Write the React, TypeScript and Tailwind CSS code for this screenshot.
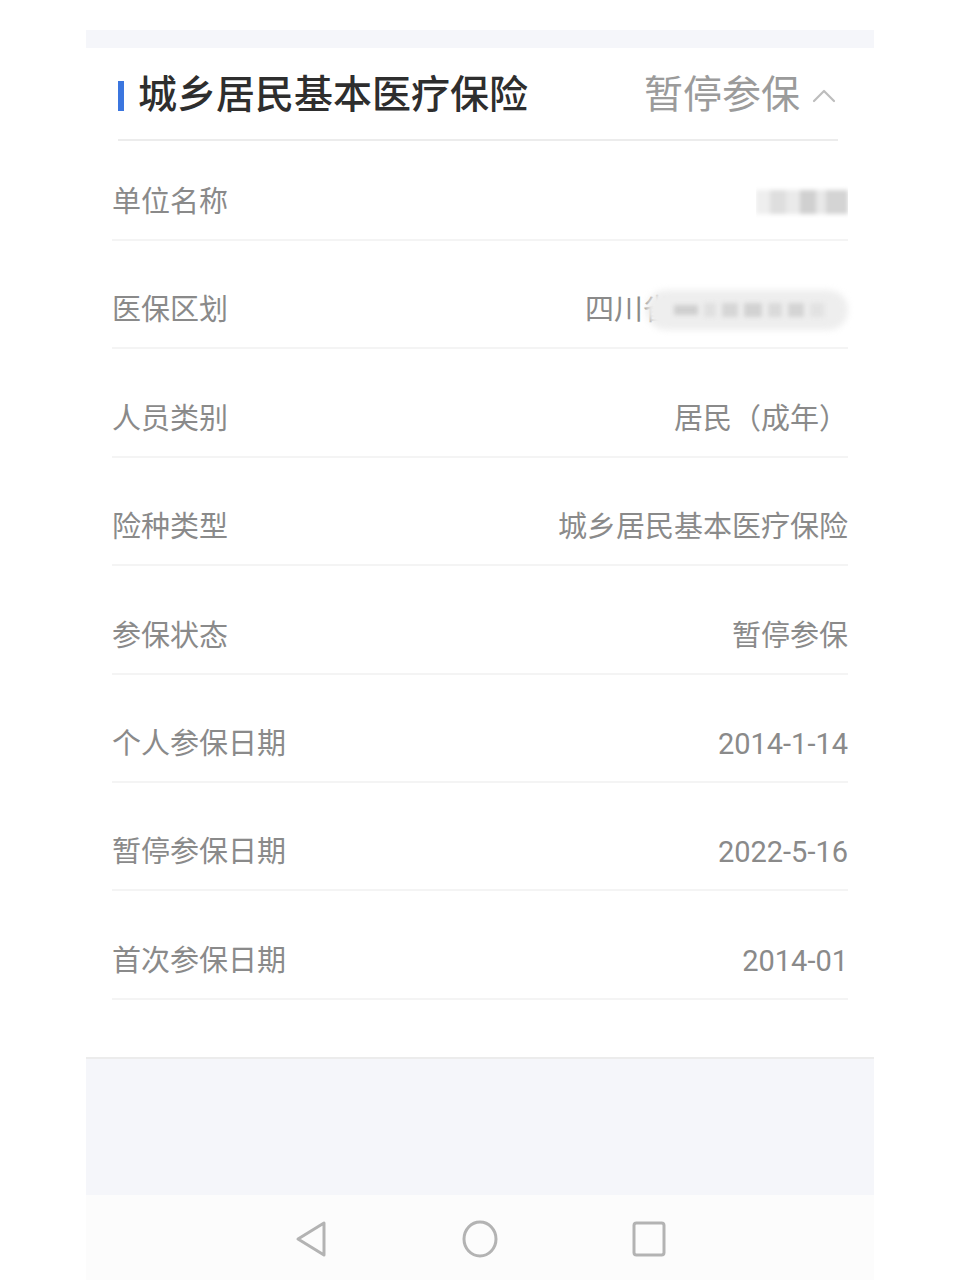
import React from "react";

const rows: { label: string; value?: string; kind?: "blur1" | "blur2" }[] = [
  { label: "单位名称", kind: "blur1" },
  { label: "医保区划", kind: "blur2" },
  { label: "人员类别", value: "居民（成年）" },
  { label: "险种类型", value: "城乡居民基本医疗保险" },
  { label: "参保状态", value: "暂停参保" },
  { label: "个人参保日期", value: "2014-1-14" },
  { label: "暂停参保日期", value: "2022-5-16" },
  { label: "首次参保日期", value: "2014-01" },
];

const font = "font-['Roboto','Noto_Sans_CJK_SC',sans-serif]";

function BlurValue1() {
  // pixelated/blurred company name
  return (
    <div className="relative w-[92px] h-[40px] overflow-hidden">
      <div className="absolute inset-0 blur-[2px] flex items-center">
        <div className="h-[24px] w-[14px] bg-[#eeeeee]" />
        <div className="h-[24px] w-[16px] bg-[#dedede]" />
        <div className="h-[24px] w-[14px] bg-[#eaeaea]" />
        <div className="h-[24px] w-[16px] bg-[#d0d0d0]" />
        <div className="h-[24px] w-[10px] bg-[#e8e8e8]" />
        <div className="h-[24px] w-[22px] bg-[#d4d4d4]" />
      </div>
    </div>
  );
}

function BlurValue2() {
  return (
    <div className="flex items-center">
      <span className="text-[29px] leading-none text-[#8a8a8a]">四川省</span>
      <div className="relative -ml-[26px] w-[202px] h-[40px]">
        <div className="absolute inset-0 rounded-full bg-[#eeeeee] blur-[3px]" />
        <div className="absolute inset-0 blur-[2px] flex items-center pl-[28px] gap-[6px]">
          <div className="h-[10px] w-[24px] bg-[#cfcfcf]" />
          <div className="h-[14px] w-[12px] bg-[#e0e0e0]" />
          <div className="h-[14px] w-[16px] bg-[#d6d6d6]" />
          <div className="h-[14px] w-[18px] bg-[#d2d2d2]" />
          <div className="h-[14px] w-[14px] bg-[#dadada]" />
          <div className="h-[14px] w-[16px] bg-[#d4d4d4]" />
          <div className="h-[14px] w-[14px] bg-[#e2e2e2]" />
        </div>
      </div>
    </div>
  );
}

export default function App() {
  return (
    <div className={`min-h-[1280px] bg-white flex flex-col ${font}`}>
      <div className="h-[30px]" />
      <div className="ml-[86px] w-[788px] flex flex-col">
        <div className="h-[18px] bg-[#f5f6fa]" />

        {/* header */}
        <div className="ml-[32px] mr-[36px] h-[93px] flex items-center border-b-2 border-[#ececec] pt-[4px]">
          <div className="w-[6px] h-[30px] bg-[#3b76df]" />
          <div className="ml-[14px] text-[39px] leading-none font-medium text-[#2e2e2e]">城乡居民基本医疗保险</div>
          <div className="ml-auto flex items-center">
            <span className="text-[39px] leading-none text-[#9b9b9b]">暂停参保</span>
            <svg className="ml-[12px] mr-[2px]" width="24" height="14" viewBox="0 0 24 14" fill="none">
              <path d="M2 12 L12 2 L22 12" stroke="#bdbdbd" strokeWidth="2.2" strokeLinecap="round" strokeLinejoin="round" />
            </svg>
          </div>
        </div>

        {/* rows */}
        <div className="px-[26px] flex flex-col">
          {rows.map((r, i) => (
            <div
              key={r.label}
              className={`flex items-end justify-between border-b-2 border-[#f4f4f4] pb-[20px] ${i === 0 ? "h-[100px]" : "h-[108.4px]"}`}
            >
              <span className="text-[29px] leading-[34px] text-[#8a8a8a]">{r.label}</span>
              {r.kind === "blur1" ? (
                <div className="-mb-[3px]"><BlurValue1 /></div>
              ) : r.kind === "blur2" ? (
                <div className="-mb-[3px]"><BlurValue2 /></div>
              ) : (
                <span className="text-[29px] leading-[34px] text-[#8a8a8a]">{r.value}</span>
              )}
            </div>
          ))}
        </div>

        <div className="h-[57px]" />
        <div className="h-[138px] bg-[#f5f6fa] border-t-2 border-[#ececec]" />

        {/* nav bar */}
        <div className="h-[85px] bg-[#fcfcfc] flex items-center justify-center gap-[134px] pt-[4px]">
          <svg width="34" height="38" viewBox="0 0 34 38" fill="none">
            <path d="M30 3 L30 35 L4 19 Z" stroke="#b3b3b3" strokeWidth="3" strokeLinejoin="round" />
          </svg>
          <svg width="36" height="38" viewBox="0 0 36 38" fill="none">
            <ellipse cx="18" cy="19" rx="16" ry="17" stroke="#b3b3b3" strokeWidth="3" />
          </svg>
          <svg width="34" height="36" viewBox="0 0 34 36" fill="none">
            <rect x="2" y="2" width="30" height="32" rx="2.5" stroke="#b3b3b3" strokeWidth="3" />
          </svg>
        </div>
      </div>
    </div>
  );
}
